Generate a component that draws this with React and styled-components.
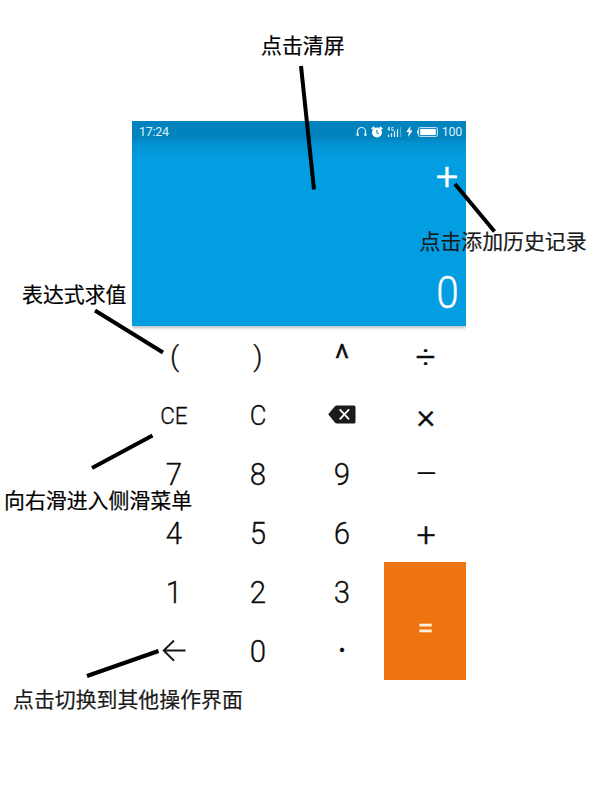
import React from "react";
import styled, { createGlobalStyle } from "styled-components";

const GlobalStyle = createGlobalStyle`
  * { box-sizing: border-box; }
  body { margin: 0; background: #fff; }
`;

const Page = styled.main`
  position: relative;
  width: 600px;
  height: 800px;
  padding: 121px 134px 0 132px;
  overflow: hidden;
  background: #fff;
  font-family: Roboto, "Noto Sans CJK SC", sans-serif;
`;

const Calculator = styled.section`
  width: 334px;
`;

const Display = styled.header`
  display: flex;
  flex-direction: column;
  height: 205px;
  color: #fff;
  background: linear-gradient(#0383bd 0, #0383bd 17px, #0391d0 22px, #039de2 38px);
  box-shadow: 0 2px 3px rgba(0, 0, 0, 0.25);
  clip-path: inset(0 0 -6px 0);
`;

const StatusBar = styled.div`
  display: flex;
  align-items: center;
  justify-content: space-between;
  height: 21px;
  padding: 0 4px 0 7px;
  font-size: 12.5px;
  letter-spacing: -0.3px;
  line-height: 21px;
  color: #d8f2fb;
`;

const StatusIcons = styled.div`
  display: flex;
  align-items: center;
  gap: 4px;
`;

const Readout = styled.div`
  display: flex;
  flex: 1;
  flex-direction: column;
  justify-content: space-between;
  align-items: flex-end;
  padding: 15px 7px 8px;
  font-weight: 300;
`;

const Expression = styled.div`
  font-size: 39px;
  line-height: 40px;
  margin-right: 1px;
  -webkit-text-stroke: 0.7px currentColor;
`;

const Result = styled.div`
  font-size: 45px;
  line-height: 50px;
  margin-right: -1px;
  transform: scaleX(0.9);
  -webkit-text-stroke: 0.3px currentColor;
`;

const Keypad = styled.div`
  display: grid;
  grid-template-columns: 84px 84px 84px 82px;
  grid-template-rows: repeat(6, 59px);
`;

const Key = styled.button`
  display: flex;
  align-items: center;
  justify-content: center;
  padding: ${(p) => p.$pad || "1px 0 0"};
  border: 0;
  background: none;
  color: #0c0c0c;
  font-family: inherit;
  font-weight: ${(p) => p.$weight || 300};
  font-size: ${(p) => p.$size || 32}px;
  line-height: 40px;
`;

const Glyph = styled.span`
  display: block;
  transform: scaleX(${(p) => p.$stretch || 0.92});
  -webkit-text-stroke: ${(p) => p.$stroke ?? 0.3}px currentColor;
`;

const EqualsKey = styled(Key)`
  grid-column: 4;
  grid-row: 5 / span 2;
  background: #ee7412;
  color: #fdeedb;
`;

const Label = styled.span`
  position: absolute;
  left: ${(p) => p.$x}px;
  top: ${(p) => p.$y}px;
  font-family: "Noto Sans CJK SC", sans-serif;
  font-size: 20.9px;
  line-height: 30px;
  white-space: nowrap;
  color: ${(p) => p.$color || "#000"};
  -webkit-text-stroke: 0.2px currentColor;
`;

const Pointers = styled.svg`
  position: absolute;
  inset: 0;
  stroke: #000;
  stroke-width: 4;
  pointer-events: none;
`;

const Headphones = () => (
  <svg width="11" height="11" viewBox="0 0 11 11" fill="none" stroke="currentColor">
    <path d="M1.500 7V5.500a4 4 0 0 1 8 0V7" strokeWidth="1.2" />
    <path d="M1.600 7v3M9.400 7v3" strokeWidth="2" />
  </svg>
);

const Alarm = () => (
  <svg width="12" height="12" viewBox="0 0 12 12">
    <circle cx="6" cy="6.5" r="5" fill="#fff" />
    <path d="M.8 3.200 3.200 1M11.200 3.200 8.800 1" stroke="#fff" strokeWidth="1.8" />
    <path d="M5.800 3.800v3l2.200.8" fill="none" stroke="#0383bd" />
  </svg>
);

const Signal = () => (
  <svg width="15" height="12" viewBox="0 0 15 12" stroke="currentColor" fill="none">
    <path d="M2.200.8.8 3.500h2M2.200.8v4M6.500 1.400H4.800v3h1.700V3.200" strokeWidth=".9" />
    <path d="M1.500 11V8.500M4.500 11V7M7.500 11V5M10.500 11V3" strokeWidth="1.3" />
    <path d="M13.500 11V1" strokeWidth="1.2" opacity=".4" />
  </svg>
);

const Bolt = () => (
  <svg width="7" height="11" viewBox="0 0 7 11" fill="#fff">
    <path d="M4.500 0 .3 6h2.500L2 11l4.700-6.400H4z" />
  </svg>
);

const Battery = () => (
  <svg width="21" height="10" viewBox="0 0 21 10">
    <rect x="1.6" y=".6" width="18.800" height="8.8" rx="1.2" fill="none" stroke="#c9eaf6" />
    <rect x="3.2" y="2.1" width="15.600" height="5.8" rx=".5" fill="#fff" />
    <path d="M.5 3.400v3.200" stroke="#c9eaf6" />
  </svg>
);

const Backspace = () => (
  <svg width="28" height="19" viewBox="0 0 28 19">
    <path d="M.2 9.300 6.700 1.600Q7.700.4 9 .4H26Q27.500.4 27.500 1.900V17Q27.500 18.500 26 18.500H9Q7.700 18.500 6.700 17.200Z" fill="#1b1b1b" />
    <path d="M11.700 4.300 21.100 14.300M21.100 4.300 11.700 14.300" stroke="#fff" strokeWidth="1.8" />
  </svg>
);

const BackArrow = () => (
  <svg width="24" height="22" viewBox="0 0 24 22" fill="none" stroke="#151515" strokeWidth="1.9">
    <path d="M23.500 10.500H1.700M12 .5 1.700 10.500 12 20.700" />
  </svg>
);

const keys = [
  { label: "(", size: 28.5, pad: "3px 0 0 1px", stretch: 1 },
  { label: ")", size: 28.5, pad: "3px 0 0", stretch: 1 },
  { label: "^", size: 39, pad: "7px 0 0", stretch: 0.9, stroke: 0.7 },
  { label: "÷", size: 34, pad: "1px 0 0 2px", stretch: 1.02, stroke: 0.7 },
  { label: "CE", size: 24.5, pad: "2px 0 0", stretch: 0.92 },
  { label: "C", size: 28, pad: "2px 0 0" },
  { label: "backspace", icon: <Backspace />, pad: "0" },
  { label: "×", size: 35, pad: "5px 0 0 2px", stretch: 1, stroke: 0.5 },
  { label: "7" },
  { label: "8" },
  { label: "9" },
  { label: "−", size: 33, pad: "0 0 0 2px", stretch: 1.26 },
  { label: "4" },
  { label: "5" },
  { label: "6" },
  { label: "+", size: 34, pad: "3px 0 0 2px", stretch: 1, stroke: 0.5 },
  { label: "1" },
  { label: "2" },
  { label: "3" },
  { label: "back", icon: <BackArrow />, pad: "0" },
  { label: "0" },
  { label: "·", size: 38, weight: 400, pad: "0" },
];

const notes = [
  { text: "点击清屏", x: 261, y: 29 },
  { text: "点击添加历史记录", x: 419.5, y: 225, color: "#1a1a1a" },
  { text: "表达式求值", x: 22, y: 278 },
  { text: "向右滑进入侧滑菜单", x: 4, y: 484 },
  { text: "点击切换到其他操作界面", x: 13, y: 683, color: "#1a1a1a" },
];

export default function App() {
  return (
    <Page>
      <GlobalStyle />
      <Calculator>
        <Display>
          <StatusBar>
            <span>17:24</span>
            <StatusIcons>
              <Headphones />
              <Alarm />
              <Signal />
              <Bolt />
              <Battery />
              <span>100</span>
            </StatusIcons>
          </StatusBar>
          <Readout>
            <Expression>+</Expression>
            <Result>0</Result>
          </Readout>
        </Display>
        <Keypad>
          {keys.map((k) => (
            <Key key={k.label} aria-label={k.label} $size={k.size} $weight={k.weight} $pad={k.pad}>
              {k.icon || <Glyph $stretch={k.stretch} $stroke={k.stroke}>{k.label}</Glyph>}
            </Key>
          ))}
          <EqualsKey $size={28} $weight={400} $pad="14px 0 0 2px">
            <Glyph $stretch={1.05}>=</Glyph>
          </EqualsKey>
        </Keypad>
      </Calculator>
      <Pointers width="600" height="800" viewBox="0 0 600 800">
        <path d="M301 66 314 189.500M455 184 494.500 231.500M95 310.500 163 352.500M92 468 152.500 435.500M87 676 158.500 651" />
      </Pointers>
      {notes.map((n) => (
        <Label key={n.text} $x={n.x} $y={n.y} $color={n.color}>{n.text}</Label>
      ))}
    </Page>
  );
}
